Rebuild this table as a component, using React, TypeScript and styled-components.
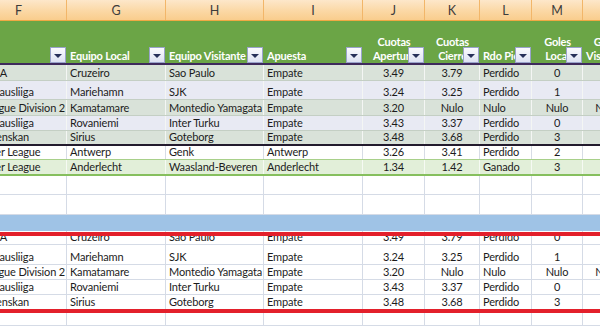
import React from 'react';
import styled, { createGlobalStyle } from 'styled-components';

const GlobalStyle = createGlobalStyle`
  html, body { margin: 0; padding: 0; background: #ffffff; overflow: hidden; }
  body { font-family: Lato, "Liberation Sans", sans-serif; }
`;

const COLS = '96px 99px 98px 99px 62px 55px 52px 51px 48px';

const Sheet = styled.div`
  position: relative;
  width: 600px;
  height: 326px;
  overflow: hidden;
  background: #ffffff;
`;

const Grid = styled.div`
  margin-left: -29px;
  width: 660px;
  display: flex;
  flex-direction: column;
`;

const LetterRow = styled.div`
  display: grid;
  grid-template-columns: ${COLS};
  height: 21px;
  box-sizing: border-box;
  background: linear-gradient(#fde7ca, #fbd8a5 55%, #f9cd8d);
  border-bottom: 1px solid #f0a844;
`;

const Letter = styled.div`
  display: flex;
  align-items: center;
  justify-content: center;
  border-right: 1px solid #f2b669;
  font-size: 12.5px;
  color: #3c3c3c;
`;

const HeaderRow = styled.div`
  display: grid;
  grid-template-columns: ${COLS};
  height: 44px;
  box-sizing: border-box;
  background: #6ba546;
  border-bottom: 2px solid #3e2a5c;
`;

const HeaderCell = styled.div<{ $center?: boolean }>`
  position: relative;
  display: flex;
  flex-direction: column;
  justify-content: flex-end;
  align-items: ${p => (p.$center ? 'center' : 'flex-start')};
  padding: 0 3px;
  color: #ffffff;
  font-weight: 700;
  font-size: 11px;
  letter-spacing: -0.2px;
  line-height: 14px;
  white-space: nowrap;
  overflow: hidden;
`;

const Dropdown = styled.span`
  position: absolute;
  right: 1px;
  bottom: 0;
  width: 16px;
  height: 16px;
  box-sizing: border-box;
  border: 1px solid #9aa3cb;
  background: linear-gradient(#fbfbfe, #dde2f3);
  display: flex;
  align-items: center;
  justify-content: center;

  &::after {
    content: '';
    margin-top: 2px;
    border-left: 4px solid transparent;
    border-right: 4px solid transparent;
    border-top: 4px solid #27305a;
  }
`;

const DataRow = styled.div<{ $h: number; $bg: string; $grid: string; $rule: string }>`
  display: grid;
  grid-template-columns: ${COLS};
  height: ${p => p.$h}px;
  box-sizing: border-box;
  background: ${p => p.$bg};
  border-bottom: ${p => p.$rule};
  --grid: ${p => p.$grid};
`;

const Cell = styled.div<{ $center?: boolean }>`
  display: flex;
  align-items: flex-end;
  justify-content: ${p => (p.$center ? 'center' : 'flex-start')};
  padding: 0 3px;
  border-right: 1px solid var(--grid);
  font-size: 11px;
  letter-spacing: -0.15px;
  line-height: 15px;
  color: #1c1c1c;
  white-space: nowrap;
  overflow: hidden;
`;

const RedBox = styled.div`
  position: absolute;
  top: 232px;
  left: -10px;
  right: -10px;
  height: 81px;
  box-sizing: border-box;
  border: 4px solid #e3202b;
  pointer-events: none;
`;

type Match = {
  liga: string; local: string; visit: string; apuesta: string;
  ap: string; ci: string; rdo: string; gl: string; gv: string;
};

const matches: Match[] = [
  { liga: 'Serie A', local: 'Cruzeiro', visit: 'Sao Paulo', apuesta: 'Empate', ap: '3.49', ci: '3.79', rdo: 'Perdido', gl: '0', gv: '' },
  { liga: 'Veikkausliiga', local: 'Mariehamn', visit: 'SJK', apuesta: 'Empate', ap: '3.24', ci: '3.25', rdo: 'Perdido', gl: '1', gv: '' },
  { liga: 'J-League Division 2', local: 'Kamatamare', visit: 'Montedio Yamagata', apuesta: 'Empate', ap: '3.20', ci: 'Nulo', rdo: 'Nulo', gl: 'Nulo', gv: 'Nulo' },
  { liga: 'Veikkausliiga', local: 'Rovaniemi', visit: 'Inter Turku', apuesta: 'Empate', ap: '3.43', ci: '3.37', rdo: 'Perdido', gl: '0', gv: '' },
  { liga: 'Allsvenskan', local: 'Sirius', visit: 'Goteborg', apuesta: 'Empate', ap: '3.48', ci: '3.68', rdo: 'Perdido', gl: '3', gv: '' },
  { liga: 'Jupiler League', local: 'Antwerp', visit: 'Genk', apuesta: 'Antwerp', ap: '3.26', ci: '3.41', rdo: 'Perdido', gl: '2', gv: '' },
  { liga: 'Jupiler League', local: 'Anderlecht', visit: 'Waasland-Beveren', apuesta: 'Anderlecht', ap: '1.34', ci: '1.42', rdo: 'Ganado', gl: '3', gv: '' },
];

type RowStyle = { h: number; bg: string; grid: string; rule: string };

const GRAY = '#d9e2d9';
const LAV = '#e8eaf3';
const BAND_GRID = '#f4f6f4';
const BAND_RULE = '1px solid #c4cfc4';
const SHEET_GRID = '#d5dbe6';

const topStyles: RowStyle[] = [
  { h: 16, bg: GRAY, grid: BAND_GRID, rule: BAND_RULE },
  { h: 19, bg: LAV, grid: BAND_GRID, rule: BAND_RULE },
  { h: 16, bg: GRAY, grid: BAND_GRID, rule: BAND_RULE },
  { h: 15, bg: LAV, grid: BAND_GRID, rule: BAND_RULE },
  { h: 15, bg: GRAY, grid: BAND_GRID, rule: '2px solid #231b2e' },
  { h: 14, bg: '#ffffff', grid: '#d7dce6', rule: '1px solid #a8d08a' },
  { h: 16, bg: '#e2efd9', grid: '#f6faf3', rule: '2px solid #86bf5e' },
];

const bottomHeights = [14, 20, 15, 15, 15];

const MatchRow: React.FC<{ m?: Match; s: RowStyle }> = ({ m, s }) => (
  <DataRow $h={s.h} $bg={s.bg} $grid={s.grid} $rule={s.rule}>
    <Cell>{m?.liga}</Cell>
    <Cell>{m?.local}</Cell>
    <Cell>{m?.visit}</Cell>
    <Cell>{m?.apuesta}</Cell>
    <Cell $center>{m?.ap}</Cell>
    <Cell $center>{m?.ci}</Cell>
    <Cell>{m?.rdo}</Cell>
    <Cell $center>{m?.gl}</Cell>
    <Cell $center>{m?.gv}</Cell>
  </DataRow>
);

const letters = ['F', 'G', 'H', 'I', 'J', 'K', 'L', 'M', 'N'];

const headers: { lines: string[]; center?: boolean }[] = [
  { lines: [''] },
  { lines: ['Equipo Local'] },
  { lines: ['Equipo Visitante'] },
  { lines: ['Apuesta'] },
  { lines: ['Cuotas', 'Apertura'], center: true },
  { lines: ['Cuotas', 'Cierre'], center: true },
  { lines: ['Rdo Pick'] },
  { lines: ['Goles', 'Local'], center: true },
  { lines: ['Goles', 'Visitante'], center: true },
];

const sheetRow = (h: number): RowStyle => ({ h, bg: '#ffffff', grid: SHEET_GRID, rule: `1px solid ${SHEET_GRID}` });

export default function App() {
  return (
    <>
      <GlobalStyle />
      <Sheet>
        <Grid>
          <LetterRow>
            {letters.map(l => (
              <Letter key={l}>{l}</Letter>
            ))}
          </LetterRow>
          <HeaderRow>
            {headers.map((h, i) => (
              <HeaderCell key={i} $center={h.center}>
                {h.lines.map((t, j) => (
                  <span key={j}>{t}</span>
                ))}
                <Dropdown />
              </HeaderCell>
            ))}
          </HeaderRow>
          {matches.map((m, i) => (
            <MatchRow key={i} m={m} s={topStyles[i]} />
          ))}
          <MatchRow s={sheetRow(19)} />
          <MatchRow s={sheetRow(20)} />
          <MatchRow s={{ h: 16, bg: '#9fc3e6', grid: '#9fc3e6', rule: 'none' }} />
          {matches.slice(0, 5).map((m, i) => (
            <MatchRow key={`b${i}`} m={m} s={sheetRow(bottomHeights[i])} />
          ))}
          <MatchRow s={sheetRow(16)} />
        </Grid>
        <RedBox />
      </Sheet>
    </>
  );
}
